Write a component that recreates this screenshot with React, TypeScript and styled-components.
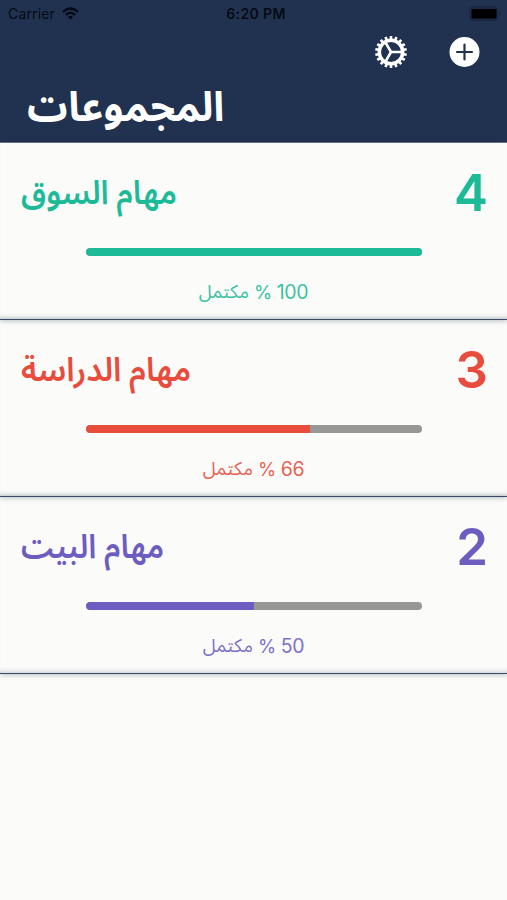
import React from 'react';
import styled, { createGlobalStyle } from 'styled-components';

const GlobalStyle = createGlobalStyle`
  * { box-sizing: border-box; }
  body { margin: 0; background: #fbfbf9; font-family: Inter, "Noto Sans Arabic", "DejaVu Sans", sans-serif; }
`;

const Screen = styled.div`
  width: 507px;
  height: 900px;
  display: flex;
  flex-direction: column;
  overflow: hidden;
  background: #fbfbf9;
`;

const Header = styled.header`
  height: 143px;
  flex: none;
  display: flex;
  flex-direction: column;
  background: #213250;
  border-bottom: 1px solid #6b7588;
`;

const StatusBar = styled.div`
  height: 27px;
  display: grid;
  grid-template-columns: 1fr auto 1fr;
  align-items: center;
  padding: 0 5px 0 8px;
  color: #060a12;
  font-size: 14px;
`;

const Carrier = styled.div`
  display: flex;
  align-items: center;
  gap: 7px;
  letter-spacing: 0.15px;
`;

const Clock = styled.div`
  font-size: 14px;
  font-weight: 600;
  letter-spacing: 0.4px;
  padding-left: 2px;
`;

const Battery = styled.svg`
  justify-self: end;
`;

const Toolbar = styled.nav`
  height: 49px;
  display: flex;
  justify-content: flex-end;
  align-items: center;
  gap: 42px;
  padding-right: 27px;
`;

const IconButton = styled.button`
  display: flex;
  padding: 0;
  border: 0;
  background: none;
`;

const Title = styled.h1<{ $stretch: number }>`
  align-self: flex-start;
  margin: 0 0 0 27px;
  height: 60px;
  line-height: 60px;
  color: #fff;
  font-size: 41px;
  font-weight: 700;
  white-space: nowrap;
  transform: scaleX(${(p) => p.$stretch});
  transform-origin: left center;
`;

const Row = styled.section<{ $color: string }>`
  height: 177px;
  flex: none;
  display: flex;
  flex-direction: column;
  color: ${(p) => p.$color};
  border-bottom: 1px solid #3f4c66;
  box-shadow: 0 1px 5px rgba(33, 50, 80, 0.3), inset 0 -5px 5px -4px rgba(33, 50, 80, 0.25);
`;

const RowHead = styled.div`
  height: 105px;
  display: flex;
  flex-direction: row;
  justify-content: space-between;
  align-items: flex-start;
  padding: 19px 19px 0 21px;
`;

const Name = styled.h2<{ $stretch: number }>`
  margin: 0;
  line-height: 60px;
  font-size: 33.5px;
  font-weight: 600;
  white-space: nowrap;
  transform: scaleX(${(p) => p.$stretch});
  transform-origin: left center;
`;

const Count = styled.span`
  margin-top: 1px;
  font-size: 51px;
  line-height: 60px;
  font-weight: 600;
`;

const Track = styled.div`
  width: 336px;
  height: 8px;
  margin-left: 86px;
  border-radius: 4px;
  overflow: hidden;
  background: #979795;
`;

const Fill = styled.div`
  height: 100%;
  background: currentColor;
  border-radius: 4px 1px 1px 4px;
`;

const Progress = styled.p`
  display: flex;
  justify-content: center;
  align-items: center;
  gap: 5px;
  margin: 23px 0 0;
  height: 26px;
  font-size: 19.5px;
  letter-spacing: -0.4px;
  opacity: 0.88;
`;

const Word = styled.span<{ $size?: number }>`
  white-space: nowrap;
  font-size: ${(p) => p.$size ?? 19.5}px;
`;

const groups = [
  { name: 'مهام السوق', count: 4, percent: 100, ratio: 1, color: '#1dba98', stretch: 0.93 },
  { name: 'مهام الدراسة', count: 3, percent: 66, ratio: 2 / 3, color: '#e74c3c', stretch: 0.952 },
  { name: 'مهام البيت', count: 2, percent: 50, ratio: 0.5, color: '#6d5dc0', stretch: 0.925 },
];

const GearIcon = () => (
  <svg width="32" height="32" viewBox="-16 -16 32 32" fill="none" stroke="#fff">
    <circle r="11.7" strokeWidth="3.5" />
    {Array.from({ length: 18 }, (_, i) => (
      <path key={i} d="M0-12.5V-15.9" strokeWidth="2.6" transform={`rotate(${i * 20})`} />
    ))}
    <path d="M0 0H11M0 0L-5.7-9.8M0 0L-5.7 9.8" strokeWidth="2.6" />
  </svg>
);

const PlusIcon = () => (
  <svg width="31" height="32" viewBox="0 0 31 32">
    <circle cx="15.5" cy="16" r="15" fill="#fff" />
    <path d="M15.5 8.5v15M8 16h15" stroke="#213250" strokeWidth="2.2" strokeLinecap="round" />
  </svg>
);

const WifiIcon = () => (
  <svg width="17" height="13" viewBox="0 0 17 13" fill="none" stroke="#060a12" strokeWidth="2.3">
    <path d="M1 5Q8.5-2 16 5" />
    <path d="M3.8 8Q8.5 3.6 13.2 8" />
    <path d="M8.5 12.4L5.9 9.8Q8.5 7.6 11.1 9.8Z" fill="#060a12" stroke="none" />
  </svg>
);

export default function App() {
  return (
    <>
      <GlobalStyle />
      <Screen>
        <Header>
          <StatusBar>
            <Carrier>
              Carrier <WifiIcon />
            </Carrier>
            <Clock>6:20 PM</Clock>
            <Battery width="33" height="15" viewBox="0 0 33 15">
              <rect x="0.5" y="0.5" width="28" height="14" rx="4" fill="#1b2942" stroke="#1a2740" />
              <rect x="2.5" y="3" width="25" height="9.5" rx="1.5" fill="#000" />
              <path d="M30 5q2 2.5 0 5z" fill="#17233a" />
            </Battery>
          </StatusBar>
          <Toolbar>
            <IconButton aria-label="الإعدادات"><GearIcon /></IconButton>
            <IconButton aria-label="إضافة"><PlusIcon /></IconButton>
          </Toolbar>
          <Title dir="rtl" $stretch={0.983}>المجموعات</Title>
        </Header>
        {groups.map((g) => (
          <Row key={g.name} $color={g.color}>
            <RowHead>
              <Name dir="rtl" $stretch={g.stretch}>{g.name}</Name>
              <Count>{g.count}</Count>
            </RowHead>
            <Track>
              <Fill style={{ width: `${g.ratio * 100}%` }} />
            </Track>
            <Progress dir="rtl">
              <Word>{g.percent}</Word>
              <Word $size={18.5}>%</Word>
              <Word $size={18.5}>مكتمل</Word>
            </Progress>
          </Row>
        ))}
      </Screen>
    </>
  );
}
